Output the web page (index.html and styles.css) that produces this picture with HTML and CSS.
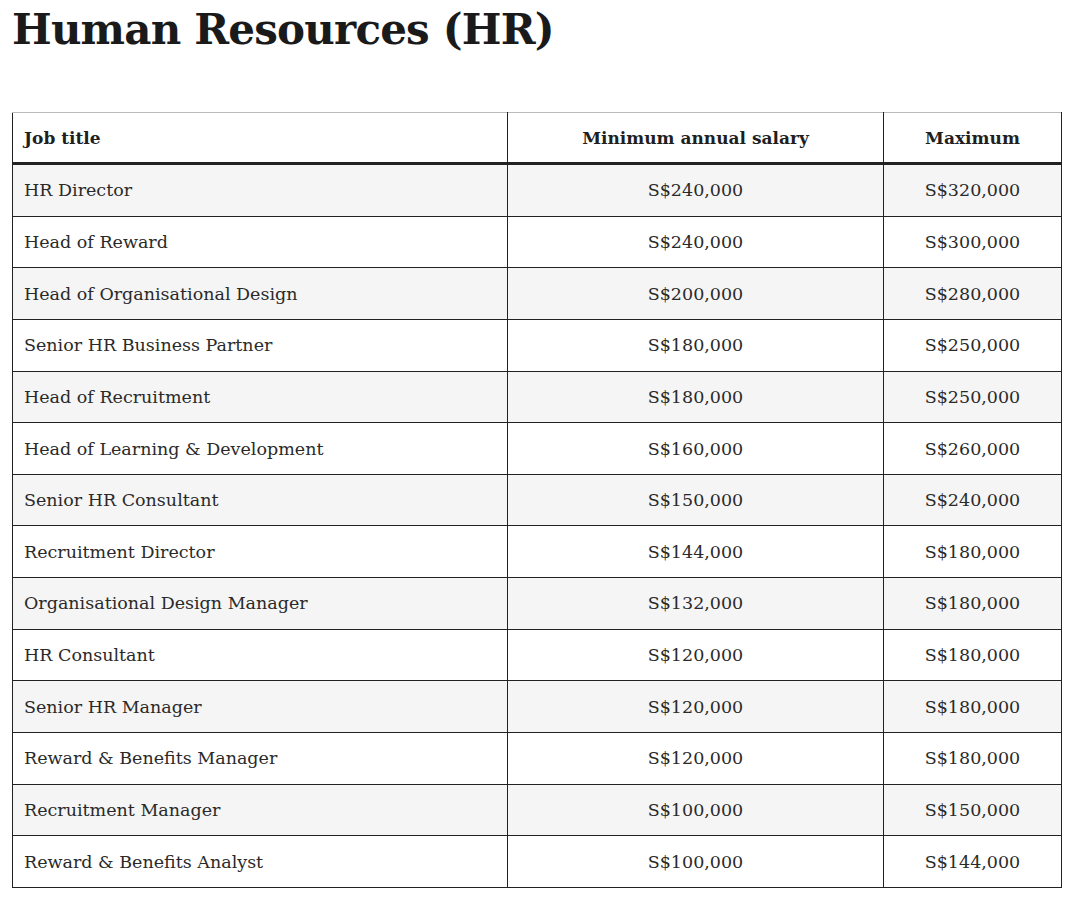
FILE: index.html
```html
<!DOCTYPE html>
<html lang="en">
<head>
<meta charset="utf-8">
<title>Human Resources (HR)</title>
<link rel="stylesheet" href="styles.css">
</head>
<body>
<h2 class="title">Human Resources (HR)</h2>
<table class="salary">
<thead>
<tr><th class="c-job">Job title</th><th class="c-num c-min">Minimum annual salary</th><th class="c-num c-max">Maximum</th></tr>
</thead>
<tbody>
<tr><td>HR Director</td><td class="c-num">S$240,000</td><td class="c-num">S$320,000</td></tr>
<tr><td>Head of Reward</td><td class="c-num">S$240,000</td><td class="c-num">S$300,000</td></tr>
<tr><td>Head of Organisational Design</td><td class="c-num">S$200,000</td><td class="c-num">S$280,000</td></tr>
<tr><td>Senior HR Business Partner</td><td class="c-num">S$180,000</td><td class="c-num">S$250,000</td></tr>
<tr><td>Head of Recruitment</td><td class="c-num">S$180,000</td><td class="c-num">S$250,000</td></tr>
<tr><td>Head of Learning &amp; Development</td><td class="c-num">S$160,000</td><td class="c-num">S$260,000</td></tr>
<tr><td>Senior HR Consultant</td><td class="c-num">S$150,000</td><td class="c-num">S$240,000</td></tr>
<tr><td>Recruitment Director</td><td class="c-num">S$144,000</td><td class="c-num">S$180,000</td></tr>
<tr><td>Organisational Design Manager</td><td class="c-num">S$132,000</td><td class="c-num">S$180,000</td></tr>
<tr><td>HR Consultant</td><td class="c-num">S$120,000</td><td class="c-num">S$180,000</td></tr>
<tr><td>Senior HR Manager</td><td class="c-num">S$120,000</td><td class="c-num">S$180,000</td></tr>
<tr><td>Reward &amp; Benefits Manager</td><td class="c-num">S$120,000</td><td class="c-num">S$180,000</td></tr>
<tr><td>Recruitment Manager</td><td class="c-num">S$100,000</td><td class="c-num">S$150,000</td></tr>
<tr><td>Reward &amp; Benefits Analyst</td><td class="c-num">S$100,000</td><td class="c-num">S$144,000</td></tr>
</tbody>
</table>
</body>
</html>
```
FILE: styles.css
```css
html, body {
  margin: 0;
  padding: 0;
  background: #ffffff;
}
body {
  padding: 0 12px;
  font-family: "DejaVu Serif", "Liberation Serif", serif;
  color: #2a2a2a;
}
.title {
  margin: 0;
  padding-top: 4px;
  font-size: 42px;
  line-height: 52px;
  font-weight: 900;
  color: #1a1a1a;
  letter-spacing: -0.8px;
}
.salary {
  margin-top: 56px;
  width: 1050px;
  border-collapse: collapse;
  table-layout: fixed;
  font-size: 17.5px;
}
.salary th, .salary td {
  border-left: 1px solid #222222;
  border-right: 1px solid #222222;
  text-align: left;
  padding: 0 11px;
}
.salary thead th {
  border-top: 1px solid #bbbbbb;
  border-bottom: 3px solid #222222;
  height: 49px;
  font-weight: bold;
  font-size: 17px;
  color: #1f1f1f;
}
.salary .c-job { width: 472px; }
.salary .c-min { width: 353px; }
.salary .c-num { text-align: center; }
.salary tbody td {
  border-bottom: 1px solid #222222;
  height: 50.65px;
}
.salary tbody tr:nth-child(odd) td {
  background: #f5f5f5;
}
```
